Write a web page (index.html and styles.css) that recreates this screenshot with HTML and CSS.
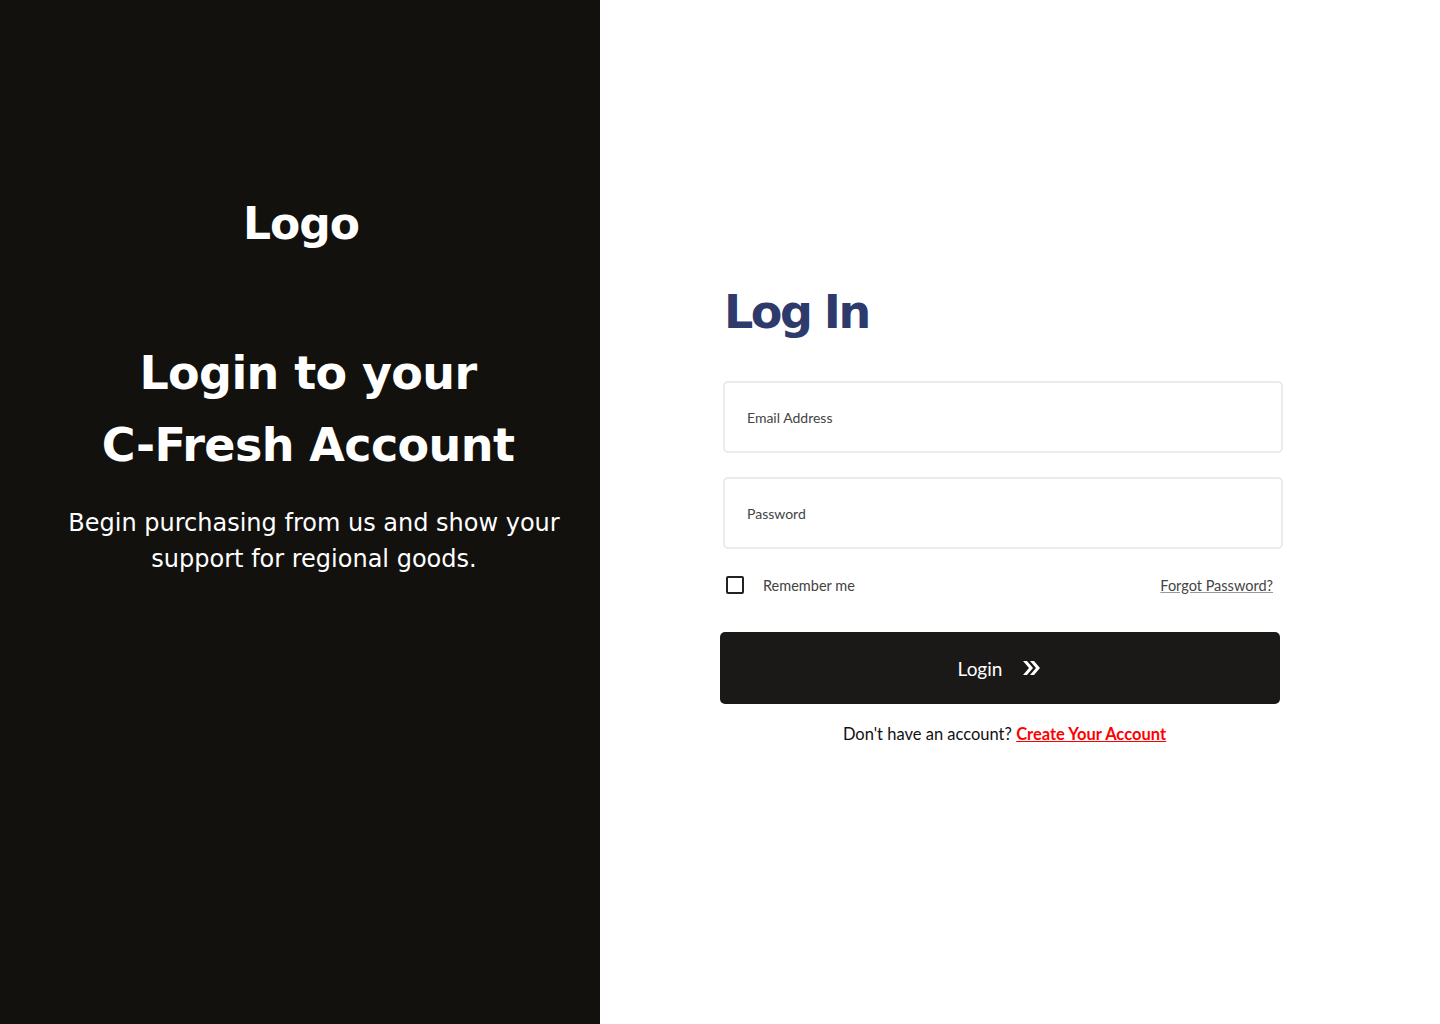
FILE: index.html
```html
<!DOCTYPE html>
<html lang="en">
<head>
<meta charset="utf-8">
<title>Log In - C-Fresh</title>
<link rel="stylesheet" href="styles.css">
</head>
<body>
<main class="page">
  <section class="brand">
    <div class="brand-logo">Logo</div>
    <h2 class="brand-title">Login to your<br>C-Fresh Account</h2>
    <p class="brand-text">Begin purchasing from us and show your support for regional goods.</p>
  </section>
  <section class="form-side">
    <form class="login-form">
      <h1 class="form-title">Log In</h1>
      <label class="field"><input type="email" placeholder="Email Address"></label>
      <label class="field"><input type="password" placeholder="Password"></label>
      <div class="options">
        <label class="remember"><span class="check"></span><span>Remember me</span></label>
        <a class="forgot" href="#">Forgot Password?</a>
      </div>
      <button class="btn" type="button">
        <span>Login</span>
        <svg class="btn-icon" width="18" height="16" viewBox="0 0 18 16" aria-hidden="true">
          <path d="M1 1h4l6 7-6 7H1l6-7z" fill="#fff"/>
          <path d="M8 1h4l6 7-6 7H8l6-7z" fill="#fff"/>
        </svg>
      </button>
      <p class="signup">Don't have an account? <a href="#">Create Your Account</a></p>
    </form>
  </section>
</main>
</body>
</html>
```

FILE: styles.css
```css
* { box-sizing: border-box; }
html, body { margin: 0; padding: 0; }
body {
  font-family: "Lato", "Noto Sans", sans-serif;
  background: #fff;
}
.page {
  display: grid;
  grid-template-columns: 600px 1fr;
  height: 1024px;
}
.brand {
  background: #12110e;
  color: #fff;
  display: flex;
  flex-direction: column;
  align-items: center;
  padding-top: 192px;
  font-family: "DejaVu Sans", sans-serif;
}
.brand-logo {
  font-size: 44px;
  font-weight: 700;
  line-height: 64px;
  letter-spacing: -1px;
  margin-left: 2px;
}
.brand-title {
  margin: 81px 0 0 16px;
  font-size: 46px;
  font-weight: 700;
  line-height: 72px;
  letter-spacing: -0.6px;
  text-align: center;
}
.brand-text {
  margin: 24px 0 0 28px;
  width: 520px;
  font-size: 24px;
  font-weight: 400;
  line-height: 36px;
  text-align: center;
}
.form-side {
  display: flex;
  padding: 280px 0 0 120px;
}
.login-form {
  width: 560px;
  display: flex;
  flex-direction: column;
}
.form-title {
  margin: 0 0 37px 4px;
  font-family: "DejaVu Sans", sans-serif;
  font-size: 46px;
  font-weight: 700;
  line-height: 64px;
  letter-spacing: -2.5px;
  color: #2e3a6b;
}
.field { display: block; margin-left: 3px; margin-bottom: 24px; }
.field input {
  display: block;
  width: 560px;
  height: 72px;
  border: 2px solid #ebebeb;
  border-radius: 5px;
  padding: 0 22px;
  font-family: "Lato", sans-serif;
  font-size: 14px;
  color: #444;
  outline: none;
}
.field input::placeholder { color: #444; }
.options {
  display: flex;
  justify-content: space-between;
  align-items: center;
  margin: 3px 7px 38px 6px;
  font-size: 14.5px;
  color: #444;
}
.remember { display: flex; align-items: center; gap: 19px; }
.check {
  width: 18px; height: 18px;
  border: 2px solid #222;
  border-radius: 2px;
}
.forgot { color: #444; text-decoration: underline; text-decoration-color: #999; }
.btn {
  width: 560px;
  height: 72px;
  border: 0;
  border-radius: 5px;
  background: #1a1918;
  color: #fff;
  font-family: "Lato", sans-serif;
  font-size: 19px;
  display: flex;
  align-items: center;
  justify-content: center;
  gap: 20px;
  padding-left: 4px;
}
.btn-icon { display: block; }
.signup {
  margin: 20px 0 0 0;
  text-align: center;
  font-size: 16.5px;
  color: #111;
  padding-left: 9px;
}
.signup a { color: #ff0000; font-weight: 700; text-decoration: underline; }
```
